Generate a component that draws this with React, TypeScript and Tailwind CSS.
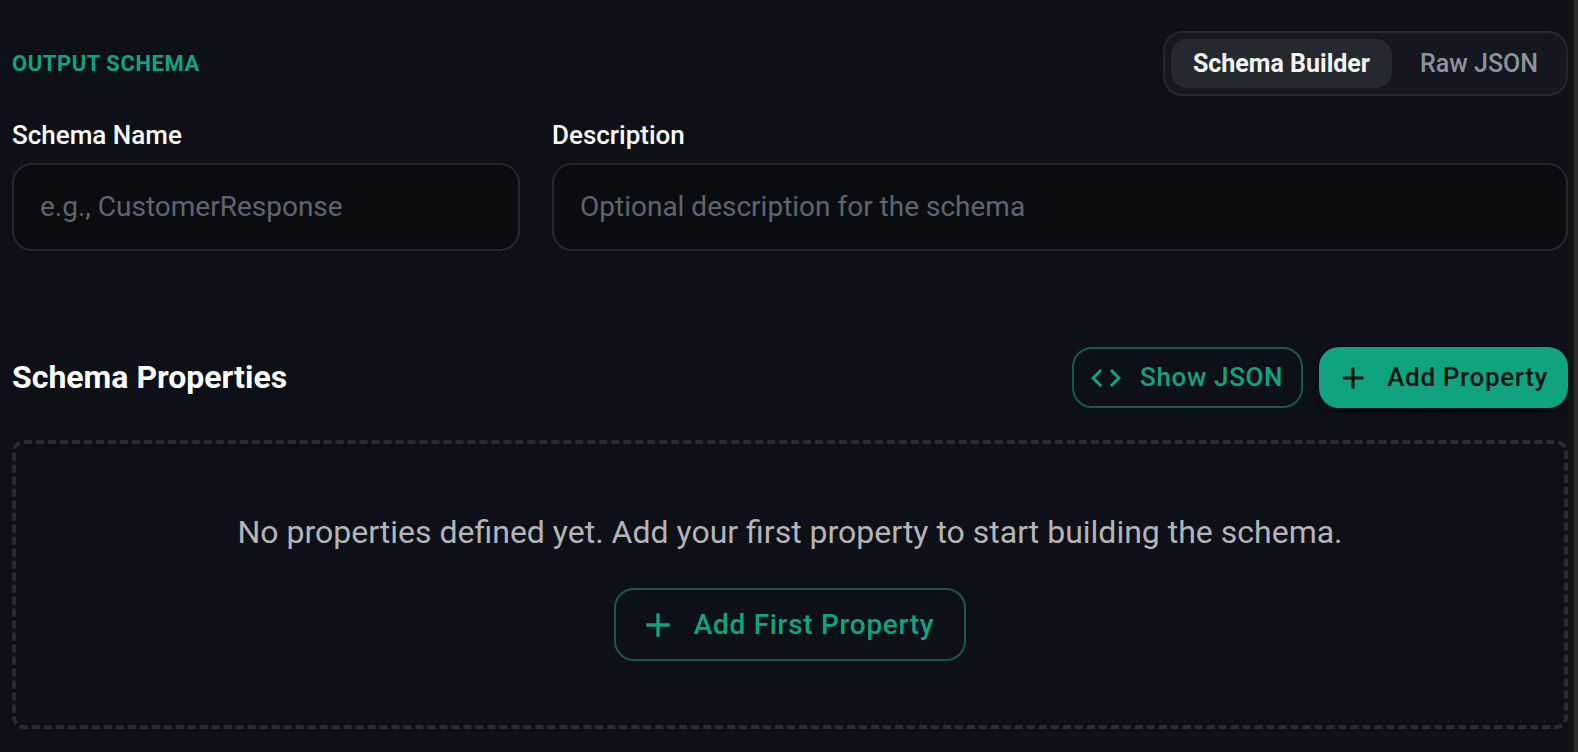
import { useState } from "react";

function PlusIcon({ className }: { className: string }) {
  return (
    <svg viewBox="0 0 24 24" fill="currentColor" aria-hidden="true" className={className}>
      <path d="M19 13h-6v6h-2v-6H5v-2h6V5h2v6h6v2z" />
    </svg>
  );
}

function CodeIcon({ className }: { className: string }) {
  return (
    <svg viewBox="0 0 24 24" fill="currentColor" aria-hidden="true" className={className}>
      <path d="M9.4 16.6 4.8 12l4.6-4.6L8 6l-6 6 6 6 1.4-1.4zm5.2 0 4.6-4.6-4.6-4.6L16 6l6 6-6 6-1.4-1.4z" />
    </svg>
  );
}

interface FieldProps {
  id: string;
  label: string;
  placeholder: string;
}

function Field({ id, label, placeholder }: FieldProps) {
  return (
    <div className="flex flex-col gap-2">
      <label htmlFor={id} className="text-[26px] leading-10 font-medium text-white">
        {label}
      </label>
      <input
        id={id}
        type="text"
        placeholder={placeholder}
        className="h-[88px] w-full rounded-[20px] border-2 border-[#25282b] bg-[#0a0d0f] px-[26px] pb-0.5 text-[28px] text-white outline-none placeholder:text-[#5c6670]"
      />
    </div>
  );
}

const modes = ["Schema Builder", "Raw JSON"];

export default function App() {
  const [mode, setMode] = useState(modes[0]);

  return (
    <div className="flex min-h-screen bg-[#0d1017] font-[Roboto,sans-serif]">
      <main className="min-w-0 flex-1 pt-[31px] pb-[23px] pl-3">
        <header className="flex items-center justify-between">
          <h2 className="text-[22px] font-bold tracking-wide text-[#10a37f] uppercase">Output Schema</h2>
          <div className="flex gap-1.5 rounded-[20px] border-2 border-[#25282b] bg-[#14171d] p-1.5">
            {modes.map((name) => (
              <button
                key={name}
                type="button"
                aria-pressed={mode === name}
                onClick={() => setMode(name)}
                className={
                  mode === name
                    ? "h-[49px] rounded-2xl bg-[#25292f] px-[22px] text-[25px] font-bold text-[#f5f5f5]"
                    : "h-[49px] rounded-2xl px-[22px] text-[25px] font-medium text-[#8b949e]"
                }
              >
                {name}
              </button>
            ))}
          </div>
        </header>

        <div className="mt-[19px] grid grid-cols-[1fr_2fr] gap-8">
          <Field id="schema-name" label="Schema Name" placeholder="e.g., CustomerResponse" />
          <Field id="schema-description" label="Description" placeholder="Optional description for the schema" />
        </div>

        <section className="mt-24">
          <div className="flex items-center justify-between">
            <h3 className="pb-0.5 text-[32px] font-bold text-white">Schema Properties</h3>
            <div className="flex gap-4">
              <button
                type="button"
                className="flex h-[61px] items-center gap-4 rounded-[20px] border-2 border-[#17594a] pr-[18px] pl-3.5 text-[26px] font-medium tracking-wide text-[#10a37f]"
              >
                <CodeIcon className="size-9" />
                Show JSON
              </button>
              <button
                type="button"
                className="flex h-[61px] items-center gap-4 rounded-[20px] bg-[#10a37f] pr-5 pl-4 text-[26px] font-medium tracking-wide text-[#06150f] shadow-md shadow-black/30"
              >
                <PlusIcon className="size-9" />
                Add Property
              </button>
            </div>
          </div>

          <div className="mt-8 flex h-[289px] flex-col items-center justify-center gap-8 rounded-xl border-4 border-dashed border-[#282b2f]">
            <p className="text-[32px] leading-12 text-[#b4b5b7]">
              No properties defined yet. Add your first property to start building the schema.
            </p>
            <button
              type="button"
              className="flex h-[73px] items-center gap-4 rounded-[20px] border-2 border-[#17594a] pr-[30px] pl-[22px] text-[28px] font-medium tracking-wide text-[#10a37f]"
            >
              <PlusIcon className="size-10" />
              Add First Property
            </button>
          </div>
        </section>
      </main>
      <div aria-hidden="true" className="w-2.5 shrink-0 border-l-6 border-[#121212] bg-[#2c2c2c]" />
    </div>
  );
}
